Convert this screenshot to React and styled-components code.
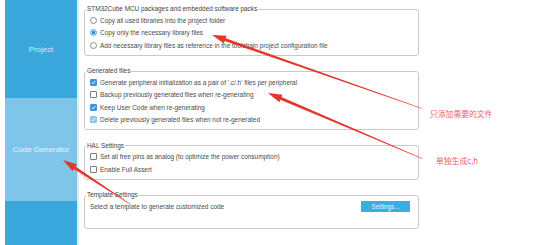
import React from "react";
import styled, { createGlobalStyle } from "styled-components";

const Global = createGlobalStyle`
  html, body { margin: 0; padding: 0; background: #ffffff; }
  body { font-family: "Liberation Sans", Arial, sans-serif; }
`;

const Page = styled.div`
  position: relative;
  display: flex;
  width: 554px;
  height: 245px;
  overflow: hidden;
  background: #ffffff;
`;

const Sidebar = styled.nav`
  margin-left: 5px;
  width: 72px;
  display: flex;
  flex-direction: column;
  background: #3aa8dc;
  border-right: 2px solid #d9eef9;
`;

const NavItem = styled.div`
  height: ${(p) => p.$h}px;
  display: flex;
  align-items: center;
  justify-content: center;
  font-size: 7.9px;
  color: ${(p) => (p.$active ? "#e9f5fc" : "#d4ecf8")};
  background: ${(p) => (p.$active ? "#7fc5ea" : "#3aa8dc")};
`;

const Main = styled.main`
  padding: 5px 0 0 5px;
  width: 335px;
  display: flex;
  flex-direction: column;
  gap: 11.5px;
`;

const Group = styled.fieldset`
  margin: 0;
  min-width: 0;
  border: 1px solid #c9c9c9;
  border-radius: 3px;
  padding: 1px 5px ${(p) => p.$pb || 3}px 5px;
  display: flex;
  flex-direction: column;
`;

const Legend = styled.legend`
  margin-left: -4px;
  padding: 0 1px;
  font-size: 6.4px;
  line-height: 8px;
  color: #444444;
`;

const Row = styled.div`
  height: ${(p) => p.$h || 12.5}px;
  display: flex;
  align-items: center;
  justify-content: ${(p) => (p.$spread ? "space-between" : "flex-start")};
  gap: 3px;
  font-size: 6.45px;
  color: #4a4a4a;
  white-space: nowrap;
`;

const Radio = styled.span`
  box-sizing: border-box;
  width: 7px;
  height: 7px;
  border-radius: 50%;
  border: 1px solid ${(p) => (p.$on ? "#5aa9e0" : "#8c8c8c")};
  background: ${(p) =>
    p.$on ? "radial-gradient(circle, #2f8ed6 0 1.6px, #cfe6f7 1.8px)" : "#fff"};
  flex: none;
`;

const Box = styled.span`
  box-sizing: border-box;
  width: 7px;
  height: 7px;
  border-radius: 1px;
  border: 1px solid ${(p) => (p.$on ? (p.$dim ? "#8fc7ec" : "#3b97dc") : "#7d7d7d")};
  background: ${(p) => (p.$on ? (p.$dim ? "#8fc7ec" : "#3b97dc") : "#fff")};
  display: flex;
  align-items: center;
  justify-content: center;
  flex: none;
`;

const Check = ({ on, dim }) => (
  <Box $on={on} $dim={dim}>
    {on && (
      <svg width="5" height="5" viewBox="0 0 10 10">
        <path d="M1.5 5.2 L4 7.7 L8.6 2.3" fill="none" stroke="#fff" strokeWidth="1.8" />
      </svg>
    )}
  </Box>
);

const Button = styled.div`
  width: 49px;
  height: 11px;
  margin-right: 3px;
  background: #3aaee2;
  color: #e4f4fc;
  font-size: 6.3px;
  display: flex;
  align-items: center;
  justify-content: center;
`;

const Overlay = styled.svg`
  position: absolute;
  left: 0;
  top: 0;
  pointer-events: none;
`;

const Note = styled.div`
  position: absolute;
  left: ${(p) => p.$x}px;
  top: ${(p) => p.$y}px;
  font-family: "Noto Sans CJK SC", "Liberation Sans", sans-serif;
  font-size: 7.8px;
  line-height: 10px;
  color: #f0605c;
  white-space: nowrap;
`;

function arrowPoints(tx, ty, hx, hy, headLen = 14, headW = 8, shaftW = 3, tailW = 0.4) {
  const dx = hx - tx;
  const dy = hy - ty;
  const len = Math.hypot(dx, dy);
  const ux = dx / len;
  const uy = dy / len;
  const nx = -uy;
  const ny = ux;
  const bx = hx - ux * headLen;
  const by = hy - uy * headLen;
  const p = (x, y) => `${x.toFixed(2)},${y.toFixed(2)}`;
  return [
    p(tx + (nx * tailW) / 2, ty + (ny * tailW) / 2),
    p(bx + (nx * shaftW) / 2, by + (ny * shaftW) / 2),
    p(bx + (nx * headW) / 2, by + (ny * headW) / 2),
    p(hx, hy),
    p(bx - (nx * headW) / 2, by - (ny * headW) / 2),
    p(bx - (nx * shaftW) / 2, by - (ny * shaftW) / 2),
    p(tx - (nx * tailW) / 2, ty - (ny * tailW) / 2),
  ].join(" ");
}

const arrows = [
  [422, 108.5, 212, 35],
  [422, 158.5, 268, 93],
  [130, 204, 63, 160],
];

export default function App() {
  return (
    <Page>
      <Global />
      <Sidebar>
        <NavItem $h={98}>Project</NavItem>
        <NavItem $h={103} $active>Code Generator</NavItem>
      </Sidebar>
      <Main>
        <Group>
          <Legend>STM32Cube MCU packages and embedded software packs</Legend>
          <Row><Radio />Copy all used libraries into the project folder</Row>
          <Row><Radio $on />Copy only the necessary library files</Row>
          <Row><Radio />Add necessary library files as reference in the toolchain project configuration file</Row>
        </Group>
        <Group>
          <Legend>Generated files</Legend>
          <Row><Check on />Generate peripheral initialization as a pair of '.c/.h' files per peripheral</Row>
          <Row><Check />Backup previously generated files when re-generating</Row>
          <Row><Check on />Keep User Code when re-generating</Row>
          <Row><Check on dim />Delete previously generated files when not re-generated</Row>
        </Group>
        <Group>
          <Legend>HAL Settings</Legend>
          <Row><Check />Set all free pins as analog (to optimize the power consumption)</Row>
          <Row><Check />Enable Full Assert</Row>
        </Group>
        <Group $pb={15}>
          <Legend>Template Settings</Legend>
          <Row $h={13} $spread>
            <span>Select a template to generate customized code</span>
            <Button>Settings...</Button>
          </Row>
        </Group>
      </Main>
      <Overlay width="554" height="245" viewBox="0 0 554 245">
        {arrows.map((a, i) => (
          <polygon key={i} points={arrowPoints(...a)} fill="#e8352b" />
        ))}
      </Overlay>
      <Note $x={430} $y={109}>只添加需要的文件</Note>
      <Note $x={436} $y={155.5}>单独生成c,h</Note>
    </Page>
  );
}
